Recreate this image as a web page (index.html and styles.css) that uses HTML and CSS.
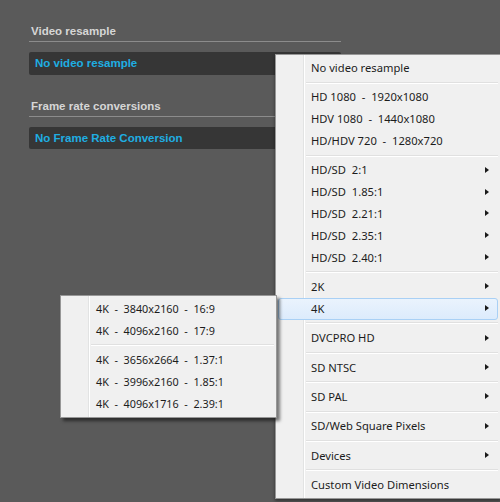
FILE: index.html
```html
<!DOCTYPE html>
<html>
<head>
<meta charset="utf-8">
<link rel="stylesheet" href="styles.css">
</head>
<body>
<div class="panel">
  <section class="section first">
    <div class="section-title">Video resample</div>
    <div class="select">No video resample</div>
  </section>
  <section class="section">
    <div class="section-title">Frame rate conversions</div>
    <div class="select">No Frame Rate Conversion</div>
  </section>
</div>

<div class="menu main-menu">
  <div class="item">No video resample</div>
  <div class="sep"></div>
  <div class="item">HD 1080  -  1920x1080</div>
  <div class="item">HDV 1080  -  1440x1080</div>
  <div class="item">HD/HDV 720  -  1280x720</div>
  <div class="sep"></div>
  <div class="item sub">HD/SD  2:1</div>
  <div class="item sub">HD/SD  1.85:1</div>
  <div class="item sub">HD/SD  2.21:1</div>
  <div class="item sub">HD/SD  2.35:1</div>
  <div class="item sub">HD/SD  2.40:1</div>
  <div class="sep"></div>
  <div class="item sub">2K</div>
  <div class="item sub active">4K</div>
  <div class="sep"></div>
  <div class="item sub">DVCPRO HD</div>
  <div class="sep"></div>
  <div class="item sub">SD NTSC</div>
  <div class="sep"></div>
  <div class="item sub">SD PAL</div>
  <div class="sep"></div>
  <div class="item sub">SD/Web Square Pixels</div>
  <div class="sep"></div>
  <div class="item sub">Devices</div>
  <div class="sep"></div>
  <div class="item">Custom Video Dimensions</div>
</div>

<div class="menu sub-menu">
  <div class="item">4K  -  3840x2160  -  16:9</div>
  <div class="item">4K  -  4096x2160  -  17:9</div>
  <div class="sep"></div>
  <div class="item">4K  -  3656x2664  -  1.37:1</div>
  <div class="item">4K  -  3996x2160  -  1.85:1</div>
  <div class="item">4K  -  4096x1716  -  2.39:1</div>
</div>
</body>
</html>
```
FILE: styles.css
```css
html, body {
  margin: 0;
  padding: 0;
}
body {
  width: 500px;
  height: 502px;
  overflow: hidden;
  background: #5a5a5a;
  position: relative;
  font-family: "Liberation Sans", Arial, sans-serif;
}
.panel {
  width: 312px;
  padding: 24px 0 0 29px;
}
.section + .section {
  margin-top: 24px;
}
.section-title {
  font-weight: bold;
  font-size: 11.5px;
  line-height: 14px;
  color: #d6d6d6;
  padding: 0 2px 3px;
  border-bottom: 1px solid #8c8c8c;
}
.select {
  margin-top: 10px;
  height: 23px;
  line-height: 23px;
  background: #363636;
  border-radius: 2px;
  color: #1faee2;
  font-weight: bold;
  font-size: 11.5px;
  padding-left: 6px;
}
.section + .section .select {
  height: 22px;
  line-height: 22px;
}

.menu {
  position: absolute;
  box-sizing: border-box;
  background:
    linear-gradient(to right, transparent 27px, #e2e3e3 27px, #e2e3e3 28px, #ffffff 28px, #ffffff 29px, transparent 29px),
    #f0f0f0;
  border: 1px solid #979797;
  padding: 2px;
  font-family: "Noto Sans", "Open Sans", sans-serif;
  font-size: 11.2px;
  color: #1c1c1c;
}
.main-menu {
  left: 275px;
  top: 54px;
  width: 226px;
  box-shadow: 0 2px 3px rgba(0, 0, 0, 0.45);
}
.sub-menu {
  left: 60px;
  top: 295px;
  width: 217px;
  font-size: 10.8px;
  box-shadow: 3px 3px 3px rgba(0, 0, 0, 0.5);
}
.item {
  box-sizing: border-box;
  height: 21.8px;
  line-height: 19.8px;
  padding-left: 32px;
  white-space: pre;
  position: relative;
  border: 1px solid transparent;
  border-radius: 3px;
}
.sub-menu .item {
  padding-left: 32px;
}
.item.sub::after {
  content: "";
  position: absolute;
  right: 8px;
  top: 6.5px;
  border-left: 4px solid #1a1a1a;
  border-top: 3.5px solid transparent;
  border-bottom: 3.5px solid transparent;
}
.item.active {
  background: linear-gradient(#eaf3fd, #dcebfc);
  border-color: #a9d0f5;
}
.sep {
  height: 1px;
  margin: 2.8px 0 2.8px 28px;
  background: #e0e0e0;
  border-bottom: 1px solid #ffffff;
}
```
